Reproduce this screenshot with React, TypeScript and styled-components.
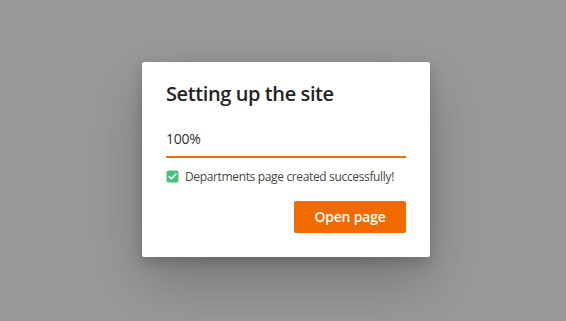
import styled, { createGlobalStyle } from "styled-components";

const Global = createGlobalStyle`
  html, body { margin: 0; height: 100%; }
  body {
    background: #999999;
    font-family: "Open Sans", "Noto Sans", sans-serif;
    color: #323130;
  }
  #root { height: 100%; }
`;

const Overlay = styled.div`
  height: 100vh;
  display: flex;
  align-items: center;
  justify-content: center;
`;

const Dialog = styled.section`
  width: 288px;
  box-sizing: border-box;
  padding: 18px 24px 24px;
  background: #ffffff;
  border-radius: 2px;
  box-shadow: rgba(0, 0, 0, 0.22) 0 25px 57px 0, rgba(0, 0, 0, 0.18) 0 5px 14px 0;
  display: flex;
  flex-direction: column;
  margin: -3px 0 0 6px;
`;

const Title = styled.h2`
  margin: 0;
  font-size: 20px;
  line-height: 28px;
  font-weight: 600;
  letter-spacing: -0.4px;
  color: #252423;
`;

const Percent = styled.div`
  margin-top: 21px;
  font-size: 14px;
  line-height: 20px;
  letter-spacing: -0.3px;
  color: #323130;
`;

const Track = styled.div`
  margin-top: 7px;
  height: 2px;
  background: #edebe9;
`;

const Fill = styled.div`
  height: 100%;
  background: #f06a00;
`;

const Status = styled.div`
  margin-top: 11px;
  display: flex;
  align-items: center;
  gap: 6px;
  font-size: 12px;
  line-height: 16px;
  letter-spacing: -0.35px;
  color: #484644;
`;

const Actions = styled.div`
  margin-top: 16px;
  display: flex;
  justify-content: flex-end;
`;

const Primary = styled.button`
  width: 112px;
  height: 32px;
  border: none;
  border-radius: 2px;
  background: #f06a00;
  color: #ffffff;
  font-family: inherit;
  font-size: 14px;
  font-weight: 600;
  letter-spacing: -0.2px;
  cursor: pointer;
`;

function CheckIcon() {
  return (
    <svg width="13" height="13" viewBox="0 0 13 13">
      <rect x="0.5" y="0.5" width="12" height="12" rx="2" fill="#4cc17e" />
      <path d="M3.3 6.7 L5.4 8.8 L9.8 4.2" fill="none" stroke="#ffffff" strokeWidth="1.6" strokeLinecap="round" strokeLinejoin="round" />
    </svg>
  );
}

export default function App() {
  const pct = 100;
  return (
    <>
      <Global />
      <Overlay>
        <Dialog>
          <Title>Setting up the site</Title>
          <Percent>{pct}%</Percent>
          <Track>
            <Fill style={{ width: `${pct}%` }} />
          </Track>
          <Status>
            <CheckIcon />
            Departments page created successfully!
          </Status>
          <Actions>
            <Primary>Open page</Primary>
          </Actions>
        </Dialog>
      </Overlay>
    </>
  );
}
